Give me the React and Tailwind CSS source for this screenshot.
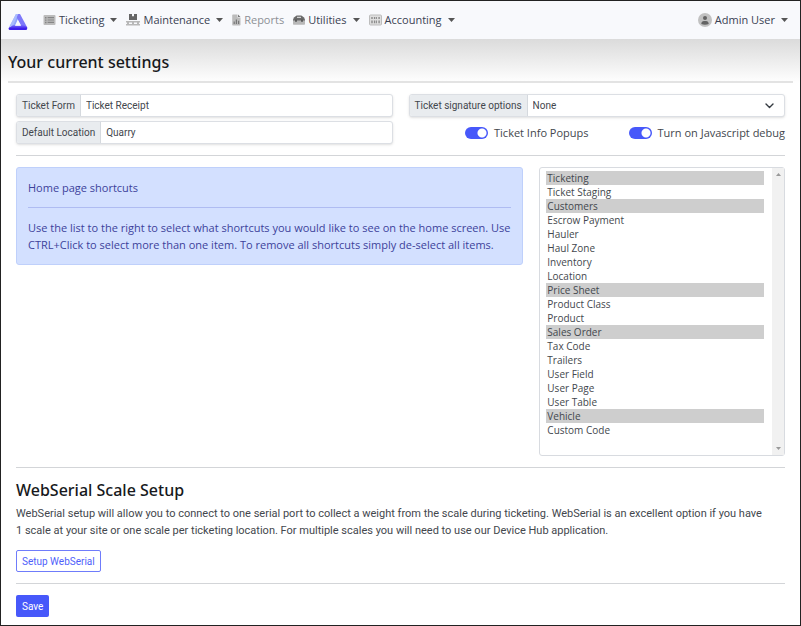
import React from "react";

const shortcuts = [
  "Ticketing", "Ticket Staging", "Customers", "Escrow Payment", "Hauler", "Haul Zone", "Inventory",
  "Location", "Price Sheet", "Product Class", "Product", "Sales Order", "Tax Code", "Trailers",
  "User Field", "User Page", "User Table", "Vehicle", "Custom Code",
];
const selectedShortcuts = ["Ticketing", "Customers", "Price Sheet", "Sales Order", "Vehicle"];

function Logo() {
  return (
    <svg className="block h-[18px] w-5" viewBox="0 0 20 18" aria-hidden="true">
      <path d="M8 1h4L7 13H2z" fill="#8fa5fc" />
      <path d="M8 1h4l7 13c.6 1.300 0 3-1.600 3h-2L9 5z" fill="#7d78fa" />
      <path d="M1 14 8 1h2.200L4.800 13.400z" fill="#a9bbfd" />
      <path d="M4.600 12.600h10l2.600.4 1.800 1c.6 1.400 0 3-1.600 3H2.200C1 17 .4 16 .7 15z" fill="#5f4cf6" />
      <path d="M1 14.600h18c.2 1.400-.4 2.400-1.600 2.400H2.200C1 17 .5 16 1 14.600z" fill="#3f20ea" />
      <path d="M10 7.500l2.900 5.200H7z" fill="#f8f9fc" />
    </svg>
  );
}

function TicketIcon() {
  return (
    <svg className="block h-3 w-[13px]" viewBox="0 0 13 12" aria-hidden="true">
      <rect x=".5" y="1" width="12" height="10" rx="1" fill="#bcbcbc" />
      <path d="M2 3h1.500v1.400H2zM2 5.400h1.500v1.400H2zM2 7.800h1.500v1.400H2zM4.600 3H11v1.200H4.600zM4.600 5.400H11v1.200H4.600zM4.600 7.800H11V9H4.600z" fill="#868686" />
    </svg>
  );
}

function MaintenanceIcon() {
  return (
    <svg className="block h-3 w-[14px]" viewBox="0 0 14 12" aria-hidden="true">
      <path d="M3 0h3v2.600l1-.7 1 .7V0h3v6H3z" fill="#666" />
      <path d="M0 7h14v1.400h-1V10h1v1.500H0V10h1V8.400H0zM3 8.400V10h3V8.400zM8 8.400V10h3V8.400z" fill="#b8b8b8" />
    </svg>
  );
}

function ReportsIcon() {
  return (
    <svg className="block h-3 w-[9px]" viewBox="0 0 9 12" aria-hidden="true">
      <path d="M1.200.5h4.300V3.500h3v7c0 .6-.4 1-1 1H1.200c-.6 0-1-.4-1-1v-9c0-.6.4-1 1-1z" fill="#bcbcbc" />
      <path d="M6 .5 8.500 3H6zM1.600 7.500h1.200V10H1.600zM3.800 5.500H5V10H3.800zM6 6.700h1.200V10H6z" fill="#777" />
    </svg>
  );
}

function UtilitiesIcon() {
  return (
    <svg className="block h-3 w-3" viewBox="0 0 12 12" aria-hidden="true">
      <path d="M3.600 1.500h4.800L11 3.500l1 2V7H0V5.500l1-2z" fill="#6a6a6a" />
      <path d="M4 2.800h4v1H4z" fill="#ececec" />
      <path d="M0 6.500h2.200V8h1.600V6.500h4.400V8h1.600V6.500H12v3.300c0 .6-.4 1-1 1H1c-.6 0-1-.4-1-1z" fill="#b8b8b8" />
      <path d="M2.200 5.500h1.600V8H2.200zM8.200 5.500h1.600V8H8.200z" fill="#555" />
    </svg>
  );
}

function AccountingIcon() {
  return (
    <svg className="block h-3 w-[13px]" viewBox="0 0 13 12" aria-hidden="true">
      <rect x=".5" y="1" width="12" height="10" rx="1" fill="#dedede" stroke="#bdbdbd" />
      <path d="M2.300 3h1.400v2H2.300zM4.900 3h1.400v2H4.900zM7.100 3h.9v2h-.9zM9.400 3h1.400v2H9.400zM2.300 6.600h1.400v2.600H2.300zM4.900 6.600h1.400v2.600H4.900zM7.100 6.600h.9v2.600h-.9zM9.400 6.600h1.400v2.600H9.400z" fill="#8b8b8b" />
    </svg>
  );
}

function UserIcon() {
  return (
    <svg className="block size-[14px]" viewBox="0 0 14 14" aria-hidden="true">
      <circle cx="7" cy="7" r="7" fill="#c1c1c1" />
      <circle cx="7" cy="5" r="2" fill="#636363" />
      <path d="M3.300 11c0-1.800 1.200-2.900 2.600-2.900h2.200c1.400 0 2.600 1.100 2.600 2.900-2 1.100-5.400 1.100-7.400 0z" fill="#636363" />
    </svg>
  );
}

function Caret() {
  return (
    <svg className="ml-1.5 block h-1 w-[7px]" viewBox="0 0 7 4" aria-hidden="true">
      <path d="M0 0h7L3.500 4z" fill="#555" />
    </svg>
  );
}

function NavItem({ icon, label, menu = true, muted = false }) {
  return (
    <button
      type="button"
      aria-haspopup={menu ? "menu" : undefined}
      className={`flex items-center whitespace-nowrap ${muted ? "text-[#8d9095]" : "text-[#3a3f52]"}`}
    >
      {icon}
      <span className="ml-[3px]">{label}</span>
      {menu && <Caret />}
    </button>
  );
}

function Field({ id, label, children }) {
  return (
    <div className="flex h-[23px] rounded-[3px] border border-[#dcdfe4] bg-white font-[Roboto,sans-serif] text-[10px] shadow-sm">
      <label htmlFor={id} className="flex items-center whitespace-nowrap rounded-l-[2px] border-r border-[#d5d9de] bg-[#e9ecef] px-[5px] text-[#43474d]">
        {label}
      </label>
      {children}
    </div>
  );
}

function Toggle({ id, label }) {
  return (
    <div className="flex items-center gap-1.5">
      <input
        id={id}
        type="checkbox"
        role="switch"
        defaultChecked
        className="h-3 w-[23px] appearance-none rounded-full bg-[#b9bdc4] bg-[radial-gradient(circle_at_6px_6px,white_4px,transparent_5px)] checked:bg-[#4758fa] checked:bg-[radial-gradient(circle_at_17px_6px,white_4px,transparent_5px)]"
      />
      <label htmlFor={id} className="whitespace-nowrap">{label}</label>
    </div>
  );
}

function Rule() {
  return <hr className="border-t border-[#d3d5d8]" />;
}

export default function App() {
  return (
    <div className="min-h-screen border border-[#222] bg-white font-['Open_Sans','Noto_Sans',sans-serif] text-[11px] leading-[17px] text-[#43474d]">
      <nav className="flex h-[38px] items-center bg-[#f8f9fc] pb-px pl-[7px] pr-3">
        <a href="#home" aria-label="Home" className="mr-[15px] pt-1"><Logo /></a>
        <div className="flex items-center gap-[9px]">
          <NavItem icon={<TicketIcon />} label="Ticketing" />
          <NavItem icon={<MaintenanceIcon />} label="Maintenance" />
          <NavItem icon={<ReportsIcon />} label="Reports" menu={false} muted />
          <NavItem icon={<UtilitiesIcon />} label="Utilities" />
          <NavItem icon={<AccountingIcon />} label="Accounting" />
        </div>
        <div className="ml-auto">
          <NavItem icon={<UserIcon />} label="Admin User" />
        </div>
      </nav>

      <header className="bg-linear-to-b from-[#dbdbdb] to-white px-[7px]">
        <h1 className="h-[44px] border-b-2 border-[#e3e3e3] pt-3 font-['Noto_Sans',sans-serif] text-[16px] font-medium leading-[22px] text-[#17191c]">
          Your current settings
        </h1>
      </header>

      <main className="flex flex-col gap-[11px] px-[15px] pt-[11px]">
        <div className="grid grid-cols-2 gap-x-4 gap-y-1">
          <Field id="ticket-form" label="Ticket Form">
            <input id="ticket-form" defaultValue="Ticket Receipt" className="min-w-0 flex-1 px-[5px] outline-none" />
          </Field>
          <Field id="signature" label="Ticket signature options">
            <div className="relative flex min-w-0 flex-1">
              <select id="signature" className="min-w-0 flex-1 appearance-none px-[5px] outline-none">
                <option>None</option>
              </select>
              <svg className="pointer-events-none absolute right-2.5 top-2 h-1.5 w-[9px]" viewBox="0 0 9 6" fill="none" stroke="#343a40" strokeWidth="1.400" aria-hidden="true">
                <path d="M1 1l3.500 3.500L8 1" strokeLinecap="round" strokeLinejoin="round" />
              </svg>
            </div>
          </Field>
          <Field id="location" label="Default Location">
            <input id="location" defaultValue="Quarry" className="min-w-0 flex-1 px-[5px] outline-none" />
          </Field>
          <div className="flex items-center justify-end gap-10">
            <Toggle id="popups" label="Ticket Info Popups" />
            <Toggle id="debug" label="Turn on Javascript debug" />
          </div>
        </div>

        <Rule />

        <div className="grid grid-cols-12 items-start gap-x-4">
          <section className="col-span-8 rounded-[3px] border border-[#bfd0fb] bg-[#d3e0ff] px-[11px] py-[11px] text-[#3d429b]">
            <p>Home page shortcuts</p>
            <hr className="my-[11px] border-t border-[#afbcf2]" />
            <p>
              Use the list to the right to select what shortcuts you would like to see on the home screen. Use
              CTRL+Click to select more than one item. To remove all shortcuts simply de-select all items.
            </p>
          </section>
          <div className="col-span-4 flex h-[289px] rounded-[3px] border border-[#d8dbe0] bg-white">
            <select
              multiple
              size={19}
              aria-label="Home page shortcuts"
              defaultValue={selectedShortcuts}
              className="min-w-0 flex-1 appearance-none overflow-hidden pb-[19px] pl-1.5 pr-2 pt-[3px] text-[10px] outline-none"
            >
              {shortcuts.map((name) => (
                <option key={name} className="h-[14px] min-h-0 p-0 pl-px leading-[14px] text-[#43474d] checked:bg-[#cecece] checked:bg-linear-to-r checked:from-[#cecece] checked:to-[#cecece]">
                  {name}
                </option>
              ))}
            </select>
            <div className="flex w-3 flex-col items-center justify-between bg-[#f1f1f1] py-[5px]" aria-hidden="true">
              <svg className="h-[3px] w-[5px]" viewBox="0 0 5 3"><path d="M0 3h5L2.500 0z" fill="#999" /></svg>
              <svg className="h-[3px] w-[5px]" viewBox="0 0 5 3"><path d="M0 0h5L2.500 3z" fill="#999" /></svg>
            </div>
          </div>
        </div>

        <Rule />

        <section>
          <h2 className="font-['Noto_Sans',sans-serif] text-[16px] font-medium leading-[22px] text-[#17191c]">WebSerial Scale Setup</h2>
          <p className="mt-1 font-[Roboto,sans-serif]">
            WebSerial setup will allow you to connect to one serial port to collect a weight from the scale during
            ticketing. WebSerial is an excellent option if you have 1&nbsp;scale at your site or one scale per ticketing
            location. For multiple scales you will need to use our Device Hub application.
          </p>
          <button type="button" className="mt-[11px] flex h-[22px] items-center rounded-[2px] border border-[#6f7cfb] px-[5px] font-[Roboto,sans-serif] text-[10px] text-[#4f5ffa]">
            Setup WebSerial
          </button>
        </section>

        <Rule />

        <button type="submit" className="flex h-[22px] items-center self-start rounded-[2px] bg-[#4758fa] px-1.5 font-[Roboto,sans-serif] text-[10px] text-white">
          Save
        </button>
      </main>
    </div>
  );
}
